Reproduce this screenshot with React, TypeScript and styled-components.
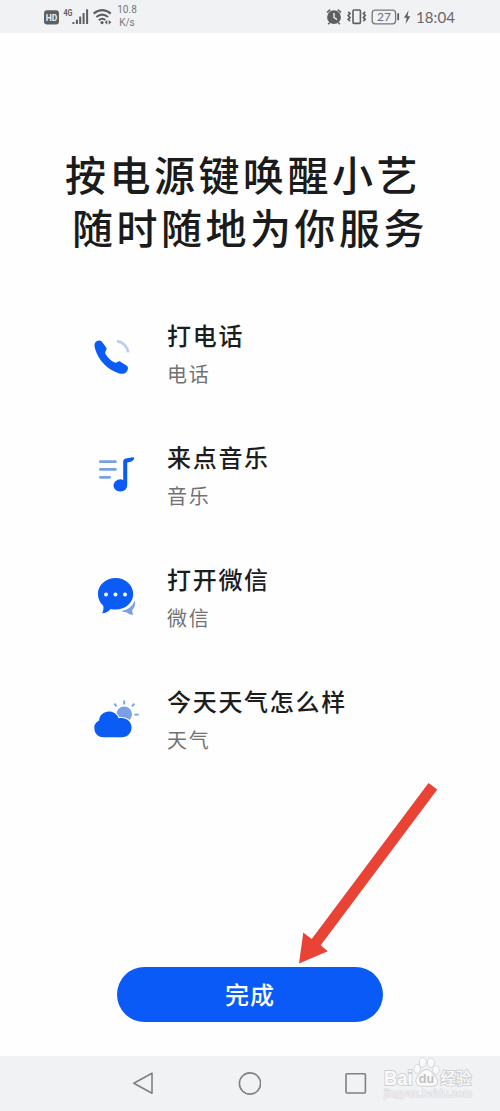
import React from "react";
import styled, { createGlobalStyle } from "styled-components";

const GlobalStyle = createGlobalStyle`
  * { box-sizing: border-box; }
  body { margin: 0; background: #fff; }
`;

const Screen = styled.div`
  position: relative;
  width: 500px;
  height: 1111px;
  display: flex;
  flex-direction: column;
  background: #fefefe;
  overflow: hidden;
  font-family: "AR PL UKai CN", "KaiTi", "Noto Sans CJK SC", sans-serif;
`;

const StatusBar = styled.header`
  height: 33px;
  flex: none;
  display: flex;
  align-items: center;
  justify-content: space-between;
  padding: 0 45px 0 44px;
  background: #f1f2f4;
  color: #5e5f61;
  font-family: Roboto, sans-serif;
`;

const StatusGroup = styled.div`
  display: flex;
  align-items: center;
`;

const Speed = styled.div`
  margin-left: 4px;
  width: 22px;
  font-size: 10px;
  line-height: 12.5px;
  text-align: center;
  color: #77787a;
  white-space: nowrap;
`;

const Clock = styled.span`
  margin-left: 4px;
  font-family: Lato, sans-serif;
  font-size: 15px;
  line-height: 20px;
  letter-spacing: 0.1px;
  color: #66676a;
`;

const Title = styled.h1`
  margin: 114px 0 0;
  padding-left: 65px;
  font-size: 41px;
  font-weight: 500;
  line-height: 53px;
  letter-spacing: 3.5px;
  color: #1b1b1b;
  white-space: nowrap;
`;

const TitleLine = styled.span<{ $indent?: number }>`
  display: block;
  padding-left: ${(p) => p.$indent ?? 0}px;
`;

const List = styled.ul`
  margin: 64px 0 0;
  padding: 0 0 0 92px;
  list-style: none;
  display: flex;
  flex-direction: column;
  gap: 46px;
`;

const Row = styled.li`
  height: 76px;
  display: flex;
  align-items: center;
  gap: 27px;
`;

const RowIcon = styled.svg`
  width: 48px;
  height: 48px;
  flex: none;
  overflow: visible;
`;

const RowText = styled.div`
  display: flex;
  flex-direction: column;
  gap: 2px;
  white-space: nowrap;
`;

const Label = styled.span`
  font-size: 24px;
  line-height: 36px;
  font-weight: 500;
  letter-spacing: 1.7px;
  color: #1d1d1d;
`;

const Sub = styled.span`
  font-size: 20px;
  line-height: 38px;
  letter-spacing: 1.8px;
  color: #727272;
`;

const DoneButton = styled.button`
  margin: auto auto 34px 117px;
  width: 266px;
  height: 55px;
  flex: none;
  padding: 0 0 2px;
  border: 0;
  border-radius: 28px;
  background: #0a5af8;
  color: #fff;
  font-family: inherit;
  font-size: 24px;
  font-weight: 500;
  line-height: 53px;
  letter-spacing: 1px;
`;

const NavBar = styled.nav`
  height: 55px;
  flex: none;
  display: flex;
  align-items: center;
  padding-left: 131px;
  gap: 82px;
  background: #f1f2f4;
`;

const Arrow = styled.svg`
  position: absolute;
  left: 290px;
  top: 775px;
  width: 160px;
  height: 195px;
  pointer-events: none;
`;

const Watermark = styled.div`
  position: absolute;
  left: 383px;
  top: 1056px;
  width: 91px;
  height: 45px;
`;

const BLUE = "#0b5cf5";
const PALE = "#7a9fe6";

const PhoneIcon = () => (
  <RowIcon viewBox="0 0 48 48">
    <path
      d="M3.2 11.5C4.8 9.4 8 8.8 9.8 10.6L14.2 16.4C15.6 18.5 12.7 20.3 13.3 22.5C15.2 26 18.8 29.8 22.7 31.6C25 32.4 26.2 29.4 28.4 30.7L34.8 34.8C37 36.5 35.8 39.5 34.2 41.3C32.4 43.3 29.2 43.1 26.5 42.2C15.5 38.6 6.5 29.6 3 17.5C2.4 15.3 2.2 13 3.2 11.5Z"
      fill={BLUE}
    />
    <path d="M25 10.2A13 13 0 0 1 36.2 21.4" fill="none" stroke="#b9cff0" strokeWidth="2.7" />
  </RowIcon>
);

const MusicIcon = () => (
  <RowIcon viewBox="0 0 48 48">
    <path d="M8.4 8.7H23.4M8.4 16.4H23.4M8.4 24.3H17.6" stroke={PALE} strokeWidth="2.8" strokeLinecap="round" />
    <path
      d="M31.2 8.2Q31.2 5.8 33.6 5.4L41 4.2Q42.2 4 42.1 5.3Q42 8 39.5 8.5L35.2 9.6V31.5A6.9 6.1 0 1 1 31.2 26.9Z"
      fill={BLUE}
    />
  </RowIcon>
);

const ChatIcon = () => (
  <RowIcon viewBox="0 0 48 48">
    <path d="M42.7 25.5C43.8 29 42.6 32.6 40.2 35.2C40 37 40.8 38.4 41.2 39.8C38.5 39.8 36.6 38.8 35 37.4C33 37.4 31 36.8 29.3 35.8C35.8 35.2 40.8 31.2 42.7 25.5Z" fill={PALE} />
    <path
      d="M23.6 3C33.5 3 41.2 10.2 41.2 19C41.2 27.8 33.5 34.5 23.6 34.5C21.8 34.5 20.2 34.3 18.6 33.9C16.5 36.6 13.8 38 10.2 38.2C11.3 36 11.8 33.5 11.3 30.8C8 27.9 5.9 23.8 5.9 19C5.9 10.2 13.7 3 23.6 3Z"
      fill={BLUE}
    />
    <g fill="#fff">
      <circle cx="14" cy="19.4" r="2" />
      <circle cx="23.5" cy="19.4" r="2" />
      <circle cx="33" cy="19.4" r="2" />
    </g>
  </RowIcon>
);

const WeatherIcon = () => (
  <RowIcon viewBox="0 0 48 48">
    <circle cx="32.2" cy="17.3" r="7.8" fill={PALE} />
    <path d="M32.2 3.6V7.4M22.3 6.6L24.6 9.4M42.3 6.6L40 9.4M42.4 17.6H46.7" stroke={PALE} strokeWidth="1.9" />
    <path
      d="M11 40.2A8.9 8.9 0 0 1 7.1 23.4C7.4 18.3 11.8 14.6 17 14.6C21.3 14.6 25 17 26.6 21.2C33.8 19.7 39.5 24.2 39.5 30.4C39.5 36 35.2 40.2 30 40.2Z"
      fill={BLUE}
      stroke="#fefefe"
      strokeWidth="2"
      paintOrder="stroke"
    />
  </RowIcon>
);

const rows = [
  { icon: <PhoneIcon />, label: "打电话", sub: "电话" },
  { icon: <MusicIcon />, label: "来点音乐", sub: "音乐" },
  { icon: <ChatIcon />, label: "打开微信", sub: "微信" },
  { icon: <WeatherIcon />, label: "今天天气怎么样", sub: "天气" },
];

const SignalIcons = () => (
  <svg width="68" height="22" viewBox="44 6 68 22" fill="#5e5f61">
    <rect x="44" y="10.3" width="15" height="14.2" rx="3" />
    <text x="51.5" y="21" textAnchor="middle" fontFamily="Roboto" fontWeight="700" fontSize="9" fill="#f1f2f4" textLength="11.5" lengthAdjust="spacingAndGlyphs">HD</text>
    <text x="63.5" y="15.5" fontFamily="Roboto" fontWeight="700" fontSize="8.5" textLength="9" lengthAdjust="spacingAndGlyphs">4G</text>
    <path d="M73.4 24V22M76.9 24V19.7M80.2 24V16.6M83.6 24V13M87.1 24V9.3" stroke="#5e5f61" strokeWidth="2" />
    <g fill="none" stroke="#5e5f61" strokeWidth="2">
      <path d="M93.6 13.6Q102.2 6.6 110.8 13.6" />
      <path d="M96.3 17Q102.2 12.2 108.1 17" />
      <path d="M98.8 20.2Q102.2 17.4 105.4 20" />
    </g>
    <circle cx="102" cy="22.6" r="1.6" />
    <path d="M107.3 20V24.4L104.7 22.2ZM108.7 20V24.4L111.4 22.2Z" />
  </svg>
);

const DeviceIcons = () => (
  <svg width="86" height="22" viewBox="327 6 86 22" fill="#5e5f61">
    <circle cx="335" cy="17.2" r="6.9" />
    <path d="M328 12.3L331.3 9.6M342 12.3L338.7 9.6M330.8 22.4L329.2 24.2M339.2 22.4L340.8 24.2" stroke="#5e5f61" strokeWidth="1.5" />
    <path d="M335 13V17.5L338 19.6" fill="none" stroke="#f1f2f4" strokeWidth="1.4" />
    <rect x="354" y="10" width="7.4" height="13.4" rx="1" fill="none" stroke="#5e5f61" strokeWidth="1.6" />
    <path d="M349.2 11.8L351 13.6L349.2 15.5L351 17.4L349.2 19.3L351 21.2M366.2 11.8L364.4 13.6L366.2 15.5L364.4 17.4L366.2 19.3L364.4 21.2" fill="none" stroke="#5e5f61" strokeWidth="1.7" />
    <rect x="373.2" y="10.2" width="23.4" height="13.6" rx="3" fill="none" stroke="#77787a" strokeWidth="1.3" />
    <rect x="398.3" y="13.3" width="1.8" height="7" rx="0.5" />
    <text x="385" y="21.2" textAnchor="middle" fontFamily="Lato" fontSize="12" fill="#6c6d6f">27</text>
    <path d="M409.6 10.3L405 17.8H407.7L406.6 24L411.4 16.2H408.5Z" />
  </svg>
);

export default function App() {
  return (
    <Screen>
      <GlobalStyle />
      <StatusBar>
        <StatusGroup>
          <SignalIcons />
          <Speed>
            10.8
            <br />
            K/s
          </Speed>
        </StatusGroup>
        <StatusGroup>
          <DeviceIcons />
          <Clock>18:04</Clock>
        </StatusGroup>
      </StatusBar>
      <Title>
        <TitleLine>按电源键唤醒小艺</TitleLine>
        <TitleLine $indent={7}>随时随地为你服务</TitleLine>
      </Title>
      <List>
        {rows.map((r) => (
          <Row key={r.label}>
            {r.icon}
            <RowText>
              <Label>{r.label}</Label>
              <Sub>{r.sub}</Sub>
            </RowText>
          </Row>
        ))}
      </List>
      <DoneButton>完成</DoneButton>
      <NavBar>
        <svg width="24" height="24" viewBox="0 0 24 24" fill="none" stroke="#7f8082" strokeWidth="1.6" strokeLinejoin="round">
          <path d="M21 1.2V21.2L2.8 11.3Z" />
        </svg>
        <svg width="24" height="24" viewBox="0 0 24 24" fill="none" stroke="#7f8082" strokeWidth="1.6">
          <circle cx="13" cy="11.5" r="10.6" />
        </svg>
        <svg width="24" height="24" viewBox="0 0 24 24" fill="none" stroke="#7f8082" strokeWidth="1.6">
          <rect x="3" y="1.8" width="19.4" height="19.2" rx="1" />
        </svg>
      </NavBar>
      <Arrow viewBox="290 775 160 195">
        <path d="M299 963.5L303.3 932.5L311.7 939L428.5 783L437.3 789.5L320.7 945.3L327.8 951.3Z" fill="#e94335" />
      </Arrow>
      <Watermark>
        <svg width="91" height="45" viewBox="383 1056 91 45">
          <g fill="#fafafa" stroke="#cfd0d2" strokeWidth="1.8" paintOrder="stroke">
            <text x="384" y="1085" fontFamily="Liberation Sans" fontWeight="700" fontSize="19.5" textLength="28.5" lengthAdjust="spacingAndGlyphs">Bai</text>
            <ellipse cx="417.2" cy="1069" rx="2.8" ry="4" strokeWidth="1.6" />
            <ellipse cx="422.8" cy="1062.5" rx="3" ry="4.4" strokeWidth="1.6" />
            <ellipse cx="430.8" cy="1062.6" rx="3" ry="4.4" strokeWidth="1.6" />
            <ellipse cx="436" cy="1070" rx="2.8" ry="4" strokeWidth="1.6" />
            <path d="M426.5 1070C431 1070 432 1074 434.8 1076.5C439 1080.5 437 1085.8 432 1085.8H421.5C416.5 1085.8 414.8 1080.5 418 1077C420.8 1074 422 1070 426.5 1070Z" />
            <text x="440.5" y="1084.3" fontFamily="Noto Sans CJK SC" fontWeight="500" fontSize="15.5">经验</text>
          </g>
          <text x="426.4" y="1082.8" textAnchor="middle" fontFamily="Liberation Sans" fontWeight="700" fontSize="12.5" fill="#bebfc1">du</text>
          <text x="384" y="1097" fontFamily="Liberation Sans" fontSize="10" fill="#f3f3f4" stroke="#d9dadc" strokeWidth="1.1" paintOrder="stroke" textLength="88" lengthAdjust="spacingAndGlyphs">jingyan.baidu.com</text>
        </svg>
      </Watermark>
    </Screen>
  );
}
